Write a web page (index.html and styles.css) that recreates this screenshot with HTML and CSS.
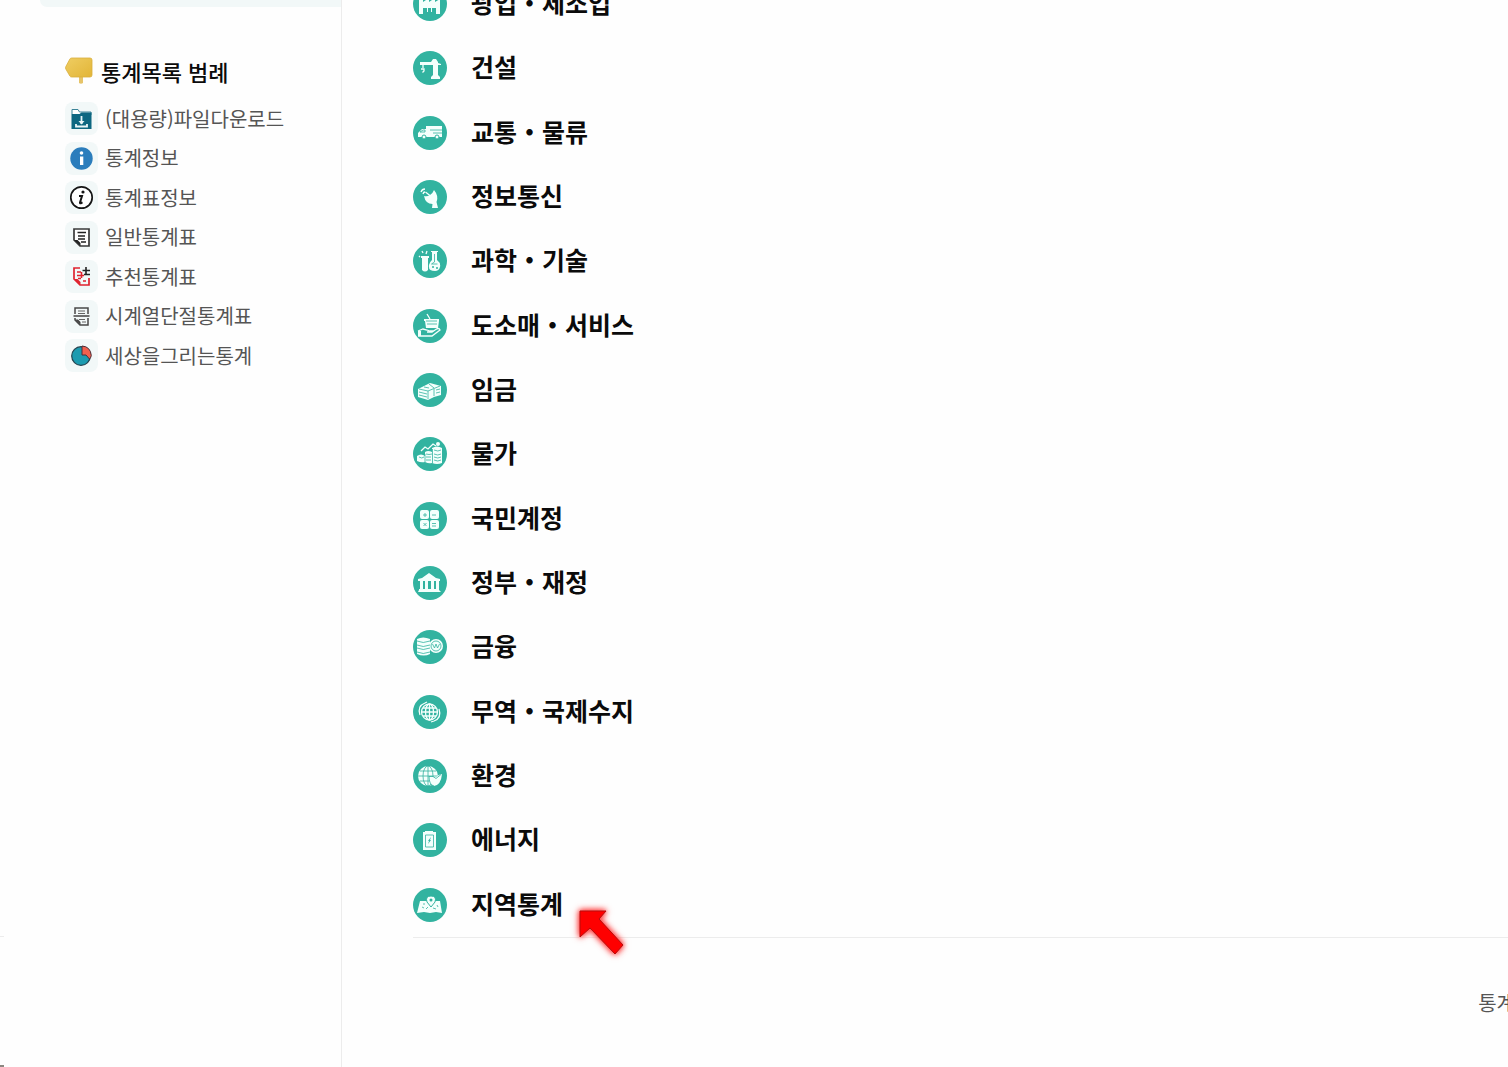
FILE: index.html
```html
<!DOCTYPE html>
<html lang="ko">
<head>
    <meta charset="UTF-8">
    <meta name="viewport" content="width=device-width, initial-scale=1.0">
    <title>통계목록</title>
    <link rel="stylesheet" href="styles.css">
</head>
<body>
    <div class="page">
        <div class="rail"></div>

        <aside class="sidebar">
            <div class="side-panel"></div>

            <section class="legend">
                <h2>
                    <svg class="sign" viewBox="0 0 28 28" aria-hidden="true">
                        <defs>
                            <linearGradient id="gold" x1="0" y1="0" x2="1" y2="1">
                                <stop offset="0" stop-color="#efcd62"/>
                                <stop offset="1" stop-color="#e2b537"/>
                            </linearGradient>
                        </defs>
                        <path d="M14 19h4v7q-2 1.500-4 0z" fill="#e6c469"/>
                        <path d="M6.500 1H25q2 0 2 2v15q0 2-2 2H6.500q-1 0-1.600-.9L.8 12q-.6-1.200 0-2.300L4.900 2Q5.500 1 6.500 1z" fill="url(#gold)" stroke="#d9ae3c" stroke-width=".8"/>
                    </svg>
                    통계목록 범례
                </h2>
                <ul class="legend-list">
                    <li>
                        <svg viewBox="0 0 33 33" aria-hidden="true">
                            <path d="M7 12V7.500h6l1.500 2.500H26v3" fill="#fff" stroke="#3d8498"/>
                            <path d="M6.500 12h8l2-1.500h10V27h-20z" fill="#0d6781"/>
                            <path d="M16.500 14v8M11 22v2.500h11V22" fill="none" stroke="#e9f6f8" stroke-width="1.800"/>
                            <path d="M13.500 19h6l-3 3.500z" fill="#e9f6f8"/>
                        </svg>
                        (대용량)파일다운로드
                    </li>
                    <li>
                        <svg viewBox="0 0 33 33" aria-hidden="true">
                            <circle cx="16.500" cy="16.500" r="11.200" fill="#2b7dbc"/>
                            <circle cx="16.500" cy="11" r="1.800" fill="#fff"/>
                            <path d="M15 14.500h3.300v8.500H15z" fill="#fff"/>
                        </svg>
                        통계정보
                    </li>
                    <li>
                        <svg viewBox="0 0 33 33" aria-hidden="true">
                            <circle cx="16.500" cy="16.500" r="10.700" fill="#fff" stroke="#161616" stroke-width="1.700"/>
                            <circle cx="18" cy="11" r="1.600" fill="#161616"/>
                            <path d="M14 15h3l-2 6.500q-.2 1 .8.700l1.700-.9" fill="none" stroke="#161616" stroke-width="2"/>
                        </svg>
                        통계표정보
                    </li>
                    <li>
                        <svg viewBox="0 0 33 33" aria-hidden="true">
                            <path d="M9 8h15v17h-9l-6-6z" fill="#fff" stroke="#3a3a3a" stroke-width="1.700"/>
                            <path d="M12.500 11.500h8.500M13 15h7M13 18h7M16 21h5" stroke="#222" stroke-width="1.600"/>
                            <path d="M9 19h3.500l3 3v3z" fill="#222"/>
                        </svg>
                        일반통계표
                    </li>
                    <li>
                        <svg viewBox="0 0 33 33" aria-hidden="true">
                            <path d="M15 8H9v11l6 6h9v-7" fill="none" stroke="#e0232f" stroke-width="1.700"/>
                            <path d="M12 12h4M12 15.500h7M13 18.500h3M18 21h3M16.500 12v6" stroke="#e0232f" stroke-width="1.600"/>
                            <path d="M9 19h3.500l3 3v3z" fill="#e0232f"/>
                            <path d="M21 7v7M17.500 10.500H25M19 14.500h6" stroke="#222" stroke-width="1.600"/>
                        </svg>
                        추천통계표
                    </li>
                    <li>
                        <svg viewBox="0 0 33 33" aria-hidden="true">
                            <path d="M10 14V8h13v6M10 18v2l5 5h8v-7" fill="none" stroke="#484848" stroke-width="1.500"/>
                            <path d="M13 11h7M13 13.500h7M14 19.500h6M17 22h4" stroke="#666" stroke-width="1.200"/>
                            <path d="M8.500 16h16" stroke="#444" stroke-width="1.700"/>
                            <path d="M10 19.500h3l2.500 2.500v3z" fill="#444"/>
                        </svg>
                        시계열단절통계표
                    </li>
                    <li>
                        <svg viewBox="0 0 33 33" aria-hidden="true">
                            <circle cx="16" cy="17" r="9.300" fill="#1c9bb0" stroke="#24434f" stroke-width="1.200"/>
                            <path d="M17 16V7q8.500.5 9.300 9.500-.3 2-1.800 3.500L21 16z" fill="#f0604e" stroke="#4a2f39" stroke-width="1"/>
                        </svg>
                        세상을그리는통계
                    </li>
                </ul>
            </section>
        </aside>

        <div class="content">
            <main>
                <ul class="subjects">
                    <li><a href="#">
                        <svg viewBox="0 0 34 34" aria-hidden="true">
                            <path d="M6 27V10h4v5l6-4v4l6-4v4l5-3v15h-4v-6h-4v4h-1v-4h-3v4h-1v-4h-4v6z"/>
                        </svg>
                        광업・제조업
                    </a></li>
                    <li><a href="#">
                        <svg viewBox="0 0 34 34" aria-hidden="true">
                            <path d="M7 11h11l2-3h3l2 3v1l3 1v1h-3v10l2 2v2h-9v-2l2-2V14H7z"/>
                            <path class="line" d="M10 13v4m-2 1h3v2l-1.500 1.500"/>
                        </svg>
                        건설
                    </a></li>
                    <li><a href="#">
                        <svg viewBox="0 0 34 34" aria-hidden="true">
                            <path d="M5 17l4-4h4v-3h16v11H5z"/>
                            <path class="cut" d="M7 16l3-2h2v2zM17 14h12M20 17h9"/>
                            <circle class="wheel" cx="11" cy="21" r="2"/>
                            <circle class="wheel" cx="24" cy="21" r="2"/>
                        </svg>
                        교통・물류
                    </a></li>
                    <li><a href="#">
                        <svg viewBox="0 0 34 34" aria-hidden="true">
                            <path d="M21 10q5 6 2.500 12l1.500 6h-6l.500-4q-7 0-8.500-8 3 1 6-1t4-5z"/>
                            <path class="line" d="M12.500 12l5 4M8 12q1-3 4-3M10 14q.5-2 2-2"/>
                        </svg>
                        정보통신
                    </a></li>
                    <li><a href="#">
                        <svg viewBox="0 0 34 34" aria-hidden="true">
                            <path d="M8 12h8v2h-1v12q-3 3-6 0V14H8zM18 7h7v1h-1v8q4 3 3 7-1 4-5 4-7 0-6-6 .5-3 3-5V8h-1z"/>
                            <path class="line" d="M6 12l1 1M9 7l1 2M14 7l-1 3"/>
                            <path class="cut" d="M21.500 10v8l-3 2h6"/>
                            <circle class="hole" cx="20" cy="23" r="1"/>
                            <circle class="hole" cx="24" cy="24" r="1"/>
                        </svg>
                        과학・기술
                    </a></li>
                    <li><a href="#">
                        <svg viewBox="0 0 34 34" aria-hidden="true">
                            <path d="M11 10h15v2l-1 7H13l-1-7h-1z"/>
                            <path class="cut" d="M13 12h11M14 15h10"/>
                            <path class="line" d="M17 10l-3-5M5 22l5-2 4 1 3 1h4M5 27h14l8-6q-1-3-5 0l-3 2h-5"/>
                            <path d="M5 22h3v5H5z"/>
                        </svg>
                        도소매・서비스
                    </a></li>
                    <li><a href="#">
                        <svg viewBox="0 0 34 34" aria-hidden="true">
                            <path d="M5 16l12-6 11 3v9l-7 2-6 3-10-3z"/>
                            <path class="cut" d="M6 16l9 2 12-5M15 18v8M6 19l8 2M6 22l8 2M21 16v7M16 11l5 4M23 17l4-1M23 20l4-1M11 14l5 1"/>
                        </svg>
                        임금
                    </a></li>
                    <li><a href="#">
                        <svg viewBox="0 0 34 34" aria-hidden="true">
                            <path d="M4 19q4-3 8 0v-4q3-2 7 0v-4q5-3 10 0v15q-5 2-10 0-3 1-7-1-4 1-8-1z"/>
                            <path class="cut" d="M6 20q3 2 5 0M12 17v8M13 17q3 1 6 0M13 20h5M13 23h5M19.500 12v14M21 13q4 2 7 0M21 17q4 2 7 0M21 20q4 2 7 0M21 23q4 2 7 0"/>
                            <path class="line" d="M8 14l4-4 3 2 5-5 3 2"/>
                            <circle cx="25" cy="7" r="2"/>
                        </svg>
                        물가
                    </a></li>
                    <li><a href="#">
                        <svg viewBox="0 0 34 34" aria-hidden="true">
                            <rect x="7" y="8" width="9" height="9" rx="2"/>
                            <rect x="17" y="8" width="9" height="9" rx="2"/>
                            <rect x="7" y="18" width="9" height="9" rx="2"/>
                            <rect x="17" y="18" width="9" height="9" rx="2"/>
                            <path class="cut" d="M10 13h4M12 11v4M19 13h4M10.500 21l3 3m0-3l-3 3M19 21.500h4M19 24h4"/>
                        </svg>
                        국민계정
                    </a></li>
                    <li><a href="#">
                        <svg viewBox="0 0 34 34" aria-hidden="true">
                            <path d="M5 15v-2l4-1 7-5 7 5 4 1v2zM7 15h3v8H7zM12 15h3v8h-3zM18 15h3v8h-3zM23 15h3v8h-3zM6 23h20v1l2 2H5l1-2z"/>
                        </svg>
                        정부・재정
                    </a></li>
                    <li><a href="#">
                        <svg viewBox="0 0 34 34" aria-hidden="true">
                            <path d="M4 9q6-3 13 0v15q-6 3-13 0z"/>
                            <circle cx="23" cy="16" r="7"/>
                            <path class="cut" d="M4 11q6 3 13 0M4 15q6 3 13 0M4 18q6 3 13 0M4 22q6 3 13 0M19.500 14l2 4 1.500-4 1.500 4 2-4"/>
                            <circle class="ring" cx="23" cy="16" r="5"/>
                        </svg>
                        금융
                    </a></li>
                    <li><a href="#">
                        <svg viewBox="0 0 34 34" aria-hidden="true">
                            <circle class="line" cx="16.500" cy="17" r="8"/>
                            <ellipse class="line" cx="16.500" cy="17" rx="4" ry="8"/>
                            <path class="line" d="M16.500 9v16M8.500 17h16M10 13h13M10 21h13M7 20q-3-9 5-12l2-1M26 14q3 9-5 12l-3 1"/>
                        </svg>
                        무역・국제수지
                    </a></li>
                    <li><a href="#">
                        <svg viewBox="0 0 34 34" aria-hidden="true">
                            <circle cx="15" cy="17" r="10"/>
                            <ellipse class="ring" cx="15" cy="17" rx="5" ry="10"/>
                            <path class="cut" d="M15 7v20M5 17h20M7 12h16M7 22h16"/>
                            <path d="M16 18h5l2 2q0-4 6-5-1 11-8 12-5-1-5-9z"/>
                            <path class="cut" d="M16 17q0 9 5 10M16 17.500h4l3 2 5-4"/>
                        </svg>
                        환경
                    </a></li>
                    <li><a href="#">
                        <svg viewBox="0 0 34 34" aria-hidden="true">
                            <path d="M10 9h2V8h8v1h3v18H10z"/>
                            <path class="cut" d="M12.500 12h8v12h-8z"/>
                            <path class="bolt" d="M18 14l-3 4h1l-1 3 3-4h-1z"/>
                        </svg>
                        에너지
                    </a></li>
                    <li><a href="#">
                        <svg viewBox="0 0 34 34" aria-hidden="true">
                            <path d="M7 13h20l2 12-6-1-6 1-6-1-7 1z"/>
                            <path class="cut" d="M9 19l2 1M13 21l2-2M20 20l3 1M24 17l1 2M11 15v2"/>
                            <path class="pin" d="M18 19l-4-5q-2-6 4-6t4 6z"/>
                            <circle class="hole" cx="18" cy="12" r="1.500"/>
                        </svg>
                        지역통계
                    </a></li>
                </ul>

                <svg class="pointer" viewBox="0 0 60 60" aria-hidden="true">
                    <path d="M9 10h26l-7 8 24 26-8 9-25-26-10 9z"/>
                </svg>
            </main>

            <footer>
                <span>통계</span>
            </footer>
        </div>
    </div>
</body>
</html>
```
FILE: styles.css
```css
:root {
    --primary-color: #32b3a0;
    --text-color: #0b0b0b;
    --text-light: #555;
    --panel-bg: #f2f8f8;
    --line-color: #ececec;
}

* {
    margin: 0;
    padding: 0;
    box-sizing: border-box;
}

body {
    background: #fefefe;
    color: var(--text-color);
    font-family: "Noto Sans CJK KR", sans-serif;
    overflow: hidden;
}

ul {
    list-style: none;
}

.page {
    display: flex;
    min-height: 100vh;
}

/* edge of the page on the far left */
.rail {
    width: 4px;
    display: flex;
    flex-direction: column;
    justify-content: flex-end;
}

.rail::after {
    content: "";
    height: 128px;
    border-top: 1px solid var(--line-color);
    border-bottom: 2px solid #8b8781;
}

.sidebar {
    width: 338px;
    flex-shrink: 0;
    padding-left: 36px;
    border-right: 1px solid var(--line-color);
}

.side-panel {
    height: 7px;
    background: var(--panel-bg);
    border-bottom-left-radius: 8px;
}

.legend {
    padding: 47px 0 0 25px;
}

.legend h2 {
    display: flex;
    align-items: center;
    gap: 8px;
    height: 34px;
    font-size: 22px;
    font-weight: 500;
}

.sign {
    width: 28px;
    height: 28px;
}

.legend-list {
    display: flex;
    flex-direction: column;
    justify-content: space-between;
    min-height: 270px;
    margin-top: 14px;
}

.legend-list li {
    display: flex;
    align-items: center;
    gap: 7px;
    color: var(--text-light);
    font-size: 20px;
    line-height: 32px;
    white-space: nowrap;
}

.legend-list svg {
    width: 33px;
    height: 33px;
    border-radius: 8px;
    background: var(--panel-bg);
}

.content {
    flex: 1;
    min-width: 0;
    display: flex;
    flex-direction: column;
    padding-left: 71px;
}

main {
    flex: 1;
    display: flex;
    position: relative;
    padding-bottom: 15px;
}

/* the list is scrolled, its first row is cut by the window */
.subjects {
    flex: 1;
    display: flex;
    flex-direction: column;
    justify-content: space-between;
    margin-top: -13px;
}

.subjects a {
    display: inline-flex;
    align-items: flex-start;
    gap: 24px;
    color: var(--text-color);
    font-size: 25px;
    font-weight: 700;
    line-height: 30px;
    text-decoration: none;
    vertical-align: top;
}

.subjects svg {
    width: 34px;
    height: 34px;
    border-radius: 50%;
    background: var(--primary-color);
    fill: #f4fffc;
}

.subjects .line {
    fill: none;
    stroke: #f4fffc;
    stroke-width: 1.3;
}

.subjects .cut,
.subjects .ring {
    fill: none;
    stroke: var(--primary-color);
    stroke-width: 0.8;
}

.subjects .wheel,
.subjects .pin {
    stroke: var(--primary-color);
}

.subjects .hole,
.subjects .bolt {
    fill: var(--primary-color);
}

.pointer {
    position: absolute;
    left: 158px;
    bottom: -24px;
    width: 60px;
    height: 60px;
    overflow: visible;
    fill: #fe0000;
    stroke: #b50d0d;
    filter: drop-shadow(0 0 3px #ff3c3c) drop-shadow(0 0 2px #ff7070);
}

footer {
    display: flex;
    align-items: center;
    justify-content: flex-end;
    height: 130px;
    border-top: 1px solid var(--line-color);
    color: var(--text-light);
    font-size: 20px;
}

footer span {
    margin-right: -7px;
    white-space: nowrap;
}
```
